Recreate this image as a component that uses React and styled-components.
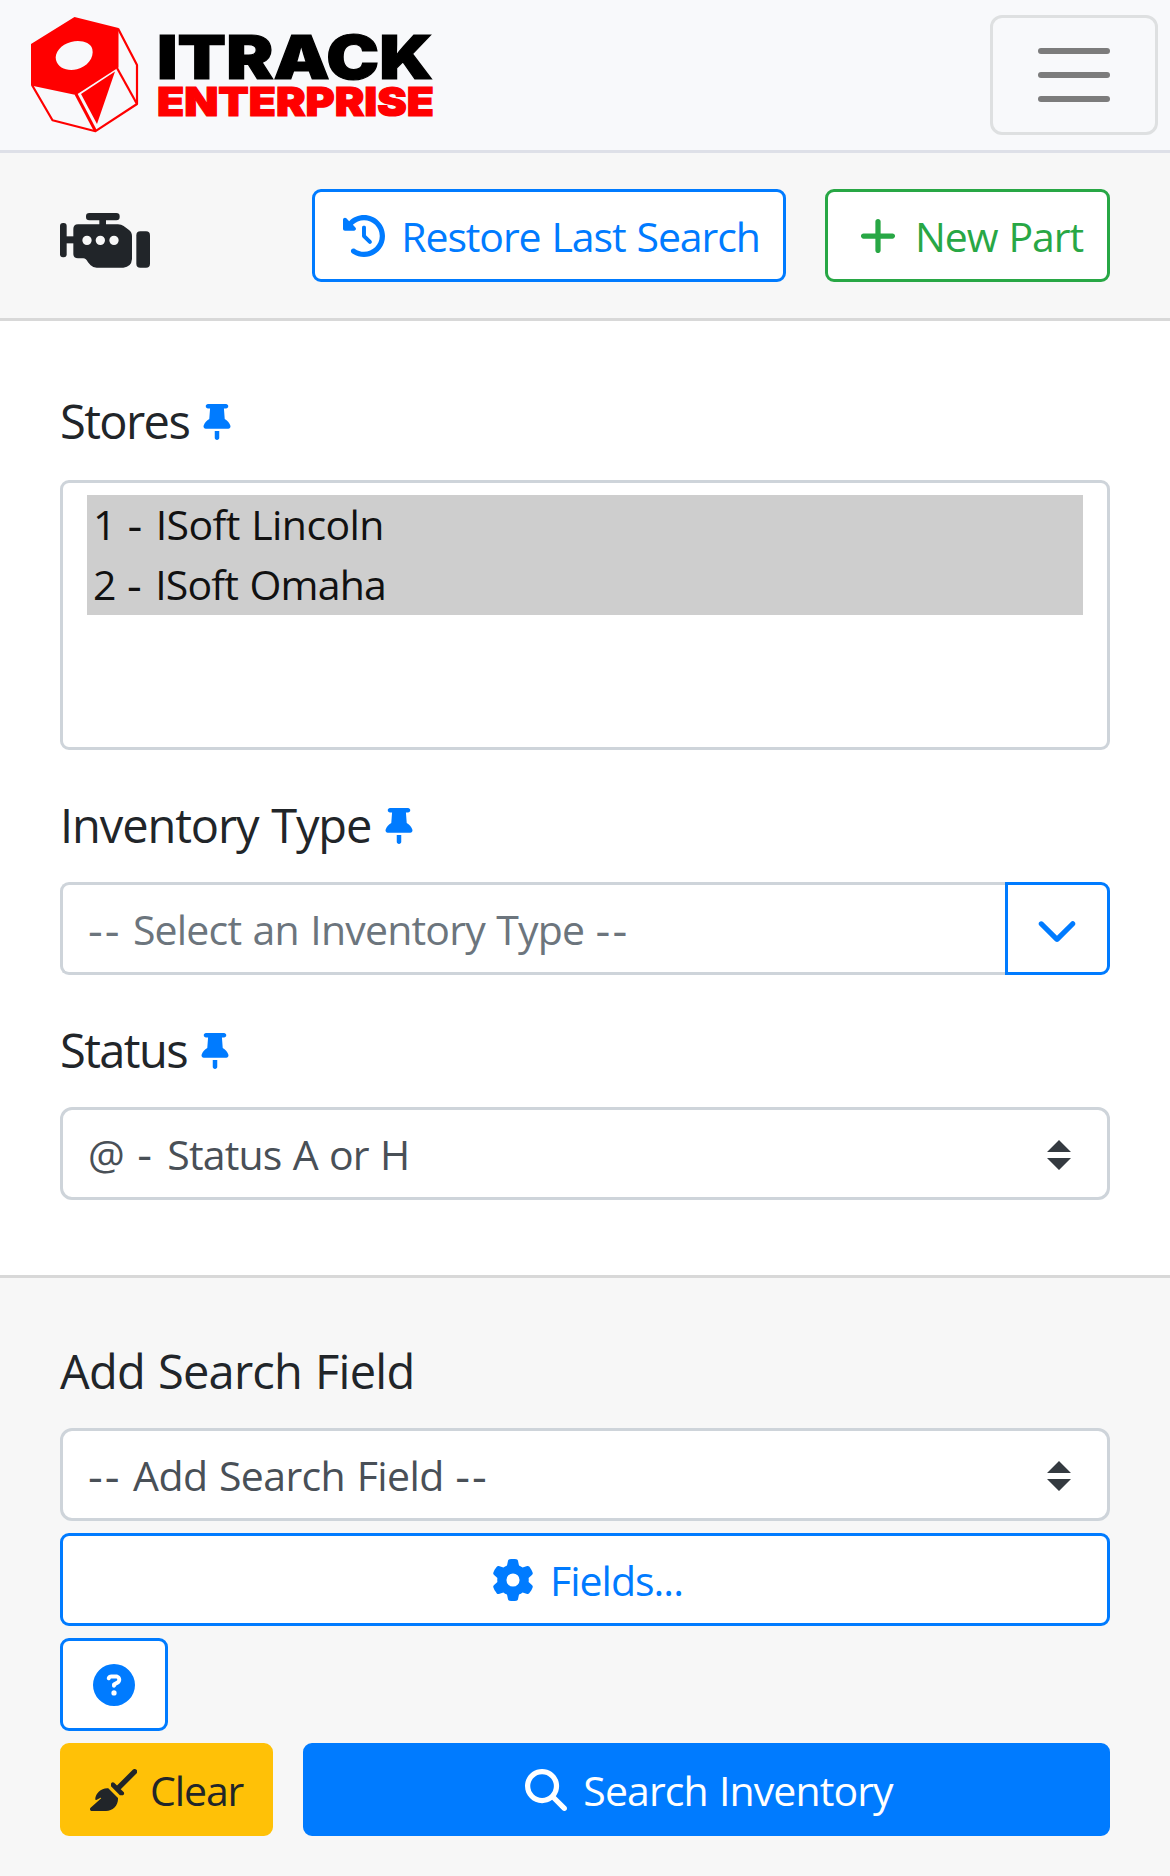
import React from "react";
import styled, { createGlobalStyle } from "styled-components";
import {
  FaClockRotateLeft,
  FaPlus,
  FaThumbtack,
  FaChevronDown,
  FaGear,
  FaCircleQuestion,
  FaMagnifyingGlass,
} from "react-icons/fa6";

const Logo = () => (
  <svg width="410" height="120" viewBox="28 15 410 120">
    <g fill="none" stroke="#f00" strokeWidth="2.2" strokeLinejoin="round">
      <path d="M118 28.5L137 65V104L95.5 131.2L52.5 120.3L32 85" />
      <path d="M117 68L137 104" />
      <path d="M76 94L95.5 131" strokeWidth="3" />
    </g>
    <path
      fill="#f00"
      fillRule="evenodd"
      d="M74.5 17L118.5 28V67.5L76 95L31 85.5V44ZM92.3 49C90.5 42.5 81 39.5 71 42C61 44.5 54.3 52.5 56 60C58 68 67.5 71.7 77 69.3C87 66.8 94.5 58 92.3 49Z"
    />
    <path fill="#f00" d="M81 94L115 71.5L97 124Z" />
    <LogoText x="157" y="78.5" fontSize="61" stroke="#000" textLength="276" lengthAdjust="spacingAndGlyphs">
      ITRACK
    </LogoText>
    <LogoText x="157" y="115.5" fontSize="40" fill="#f00" stroke="#f00" textLength="277" lengthAdjust="spacingAndGlyphs">
      ENTERPRISE
    </LogoText>
  </svg>
);

const EngineIcon = () => (
  <svg width="90" height="55" viewBox="0 0 270 165" fill="#212529">
    <rect x="0" y="30" width="20" height="103" rx="9" />
    <rect x="18" y="70" width="24" height="21" />
    <rect x="78" y="0" width="101" height="22" rx="10" />
    <rect x="118" y="18" width="20" height="20" />
    <rect x="229" y="55" width="41" height="109" rx="12" />
    <path
      fillRule="evenodd"
      d="M54 34H174Q184 34 191 39L206 50Q216 57 216 69V138Q214 162 190 164H110Q99 164 92 157L84 148Q78 136 70 136H54Q40 136 40 122V48Q40 34 54 34ZM67 82a14 14 0 1 0 28 0a14 14 0 1 0-28 0ZM107 82a14 14 0 1 0 28 0a14 14 0 1 0-28 0ZM148 82a14 14 0 1 0 28 0a14 14 0 1 0-28 0Z"
    />
  </svg>
);

const BroomIcon = () => (
  <svg viewBox="0 0 576 512" fill="currentColor">
    <path d="M566.6 54.6c12.5-12.5 12.5-32.8 0-45.3s-32.8-12.5-45.3 0l-192 192-34.7-34.7c-4.2-4.2-10-6.6-16-6.6c-12.5 0-22.6 10.1-22.6 22.6l0 29.1L364.3 320l29.1 0c12.5 0 22.6-10.1 22.6-22.6c0-6-2.4-11.8-6.6-16l-34.7-34.7 192-192zM341.1 353.4L222.6 234.9c-42.7-3.7-85.2 11.7-115.8 42.3l-8 8C76.5 307.5 64 337.7 64 369.2c0 6.8 7.1 11.2 13.2 8.2l51.1-25.5c5-2.5 9.5 4.1 5.4 7.9L7.3 473.4C2.7 477.6 0 483.6 0 489.9C0 502.1 9.9 512 22.1 512l173.3 0c38.8 0 75.9-15.4 103.4-42.8c30.6-30.6 45.9-73.1 42.3-115.8z" />
  </svg>
);

const SortArrows = () => (
  <svg width="24" height="32" viewBox="0 -2 24 32" fill="#343a40">
    <path d="M0 12L12 0L24 12ZM0 18H24L12 30Z" />
  </svg>
);

const PinnedLabel = ({ children, track, gap }) => (
  <Label $gap={gap}>
    <Text $track={track}>{children}</Text>
    <FaThumbtack color="#007bff" />
  </Label>
);

const App = () => {
  return (
    <>
      <GlobalStyle />
      <Navbar>
        <Logo />
        <Toggler>
          <Bar />
          <Bar />
          <Bar />
        </Toggler>
      </Navbar>
      <Toolbar>
        <EngineIcon />
        <ToolbarButtons>
          <Button $width="474px">
            <FaClockRotateLeft />
            <Text $track="-1.1px">Restore Last Search</Text>
          </Button>
          <Button $width="285px" $color="#28a745">
            <FaPlus />
            <Text $track="-1.1px">New Part</Text>
          </Button>
        </ToolbarButtons>
      </Toolbar>
      <Filters>
        <PinnedLabel track="-1.6px" gap="23px">
          Stores
        </PinnedLabel>
        <ListBox>
          <Option>
            <Text $track="-0.6px">
              1 <Dash>-</Dash> ISoft Lincoln
            </Text>
          </Option>
          <Option>
            <Text $track="-0.8px">
              2 <Dash>-</Dash> ISoft Omaha
            </Text>
          </Option>
        </ListBox>
        <PinnedLabel track="-1.1px">Inventory Type</PinnedLabel>
        <InputGroup>
          <Input>
            <Text $track="-0.8px">
              <Dash>--</Dash> Select an Inventory Type <Dash>--</Dash>
            </Text>
          </Input>
          <DropButton>
            <FaChevronDown />
          </DropButton>
        </InputGroup>
        <PinnedLabel track="-1.6px">Status</PinnedLabel>
        <Select>
          <Text $track="-0.85px">
            @ <Dash $room="2px">-</Dash> Status A or H
          </Text>
          <SortArrows />
        </Select>
      </Filters>
      <Footer>
        <Label>
          <Text $track="-0.76px">Add Search Field</Text>
        </Label>
        <Select>
          <Text $track="-0.6px">
            <Dash>--</Dash> Add Search Field <Dash>--</Dash>
          </Text>
          <SortArrows />
        </Select>
        <Button>
          <FaGear />
          <Text $track="-1px">Fields...</Text>
        </Button>
        <IconButton $width="108px">
          <FaCircleQuestion />
        </IconButton>
        <Actions>
          <ClearButton $width="213px" $color="#212529" $fill="#ffc107">
            <BroomIcon />
            <Text $track="-1.1px">Clear</Text>
          </ClearButton>
          <Button $width="807px" $color="#fff" $fill="#007bff">
            <FaMagnifyingGlass />
            <Text $track="-0.9px">Search Inventory</Text>
          </Button>
        </Actions>
      </Footer>
    </>
  );
};

export default App;

const GlobalStyle = createGlobalStyle`
  * {
    box-sizing: border-box;
  }
  body {
    margin: 0;
    background-color: #fff;
    color: #212529;
    font-family: "Open Sans", "Noto Sans", sans-serif;
    font-size: 41px;
  }
  button {
    font: inherit;
  }
  svg {
    display: block;
    flex-shrink: 0;
  }
`;
const Navbar = styled.nav`
  display: flex;
  align-items: center;
  justify-content: space-between;
  height: 153px;
  padding: 0 12px 0 28px;
  background-color: #f8f9fb;
  border-bottom: 3px solid #dee0e8;
`;
const LogoText = styled.text`
  font-family: Inter, sans-serif;
  font-weight: 900;
  stroke-width: 1.2px;
`;
const Toggler = styled.button`
  display: flex;
  flex-direction: column;
  align-items: center;
  justify-content: center;
  gap: 18px;
  width: 168px;
  height: 120px;
  padding: 0;
  background-color: transparent;
  border: 3px solid #dee0e1;
  border-radius: 12px;
`;
const Bar = styled.span`
  width: 72px;
  height: 6px;
  border-radius: 3px;
  background-color: #7c7c7c;
`;
const Toolbar = styled.div`
  display: flex;
  align-items: center;
  justify-content: space-between;
  height: 168px;
  padding: 0 60px;
  background-color: #f7f7f7;
  border-bottom: 3px solid #d8d8d8;
  & > svg {
    margin-top: 9px;
  }
`;
const ToolbarButtons = styled.div`
  display: flex;
  gap: 39px;
`;
const Text = styled.span`
  letter-spacing: ${({ $track }) => $track || "0"};
  word-spacing: 1.5px;
  white-space: nowrap;
`;
const Dash = styled.span`
  margin: 0 ${({ $room }) => $room || "0"};
  font-size: 1.12em;
  line-height: 0;
  letter-spacing: 2px;
  vertical-align: -1.5px;
`;
const Button = styled.button`
  display: flex;
  align-items: center;
  justify-content: center;
  gap: 16px;
  width: ${({ $width }) => $width || "100%"};
  height: 93px;
  padding: 0 0 0 5px;
  color: ${({ $color }) => $color || "#007bff"};
  background-color: ${({ $fill }) => $fill || "#fff"};
  border: 3px solid ${({ $fill, $color }) => $fill || $color || "#007bff"};
  border-radius: 9px;
  & svg {
    height: 42px;
    width: auto;
  }
`;
const IconButton = styled(Button)`
  padding: 0 1px 0 0;
`;
const DropButton = styled(IconButton)`
  width: 105px;
  padding: 0 2px 0 0;
  border-radius: 0 9px 9px 0;
`;
const ClearButton = styled(Button)`
  gap: 13px;
  padding: 0;
`;
const Filters = styled.section`
  padding: 64px 60px 75px;
  border-bottom: 3px solid #d8d8d8;
`;
const Label = styled.div`
  display: flex;
  align-items: center;
  gap: 10px;
  height: 72px;
  margin-bottom: ${({ $gap }) => $gap || "21px"};
  font-size: 47px;
  & svg {
    height: 36px;
    width: auto;
    margin-top: 1px;
  }
`;
const ListBox = styled.div`
  height: 270px;
  margin-bottom: 39px;
  padding: 12px 24px;
  background-color: #fff;
  border: 3px solid #ced4da;
  border-radius: 9px;
`;
const Option = styled.div`
  display: flex;
  align-items: center;
  height: 60px;
  padding: 0 0 2px 6px;
  color: #111;
  background-color: #cecece;
`;
const InputGroup = styled.div`
  display: flex;
  height: 93px;
  margin-bottom: 39px;
`;
const Input = styled.div`
  display: flex;
  flex: 1;
  align-items: center;
  padding: 0 25px;
  color: #6c757d;
  background-color: #fff;
  border: 3px solid #ced4da;
  border-right: none;
  border-radius: 9px 0 0 9px;
`;
const Select = styled.div`
  display: flex;
  align-items: center;
  justify-content: space-between;
  height: 93px;
  padding: 0 36px 0 25px;
  color: #495057;
  background-color: #fff;
  border: 3px solid #ced4da;
  border-radius: 12px;
`;
const Footer = styled.section`
  display: flex;
  flex-direction: column;
  gap: 12px;
  padding: 57px 60px 40px;
  background-color: #f7f7f7;
  & > ${Label} {
    margin-bottom: 9px;
  }
`;
const Actions = styled.div`
  display: flex;
  justify-content: space-between;
`;
